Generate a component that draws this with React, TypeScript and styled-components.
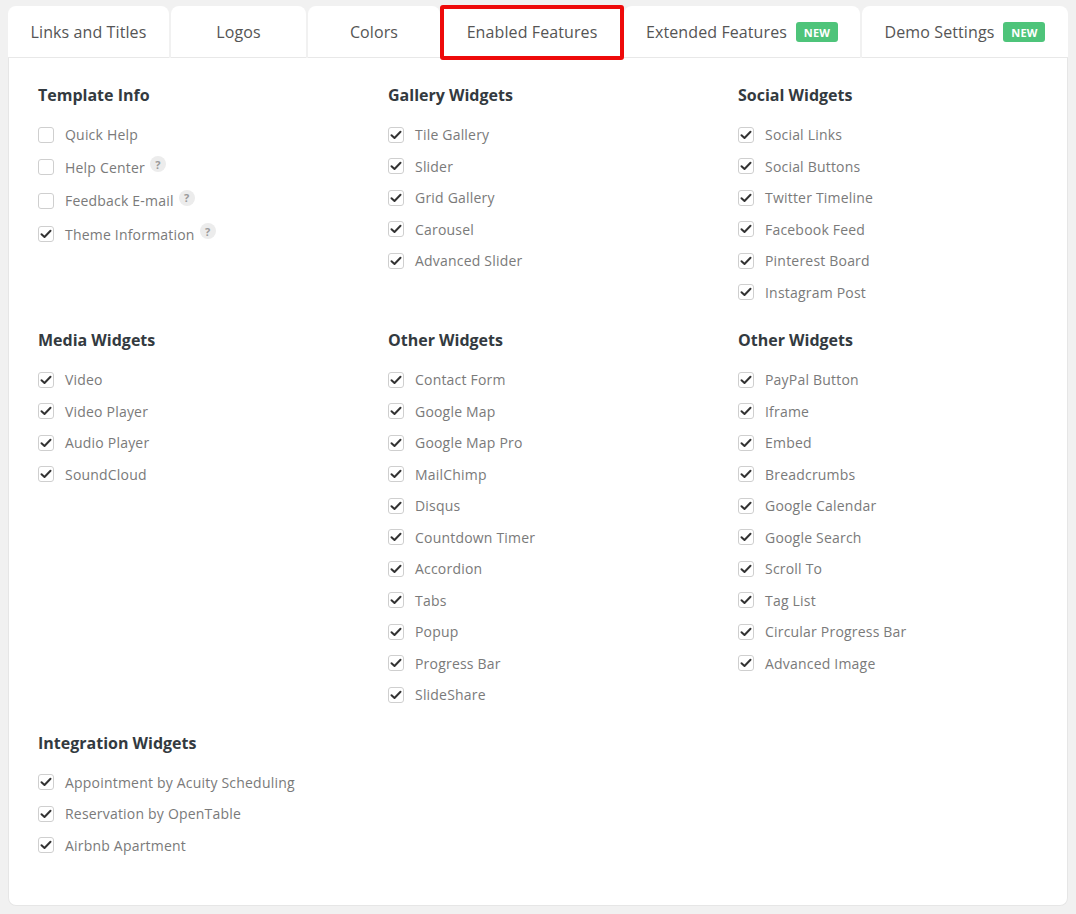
import React from "react";
import styled, { createGlobalStyle } from "styled-components";

const Global = createGlobalStyle`
  html, body { margin: 0; padding: 0; background: #f1f1f1; }
  body { font-family: "Open Sans", "Noto Sans", sans-serif; -webkit-font-smoothing: antialiased; }
  * { box-sizing: border-box; }
`;

const Page = styled.div`
  padding: 6px 8px 8px 8px;
  width: 1076px;
`;

const TabBar = styled.div`
  display: flex;
  gap: 2px;
  height: 52px;
`;

const Tab = styled.div<{ $w: number; $active?: boolean }>`
  position: relative;
  width: ${(p) => p.$w}px;
  flex: none;
  background: #fff;
  border-radius: 8px 8px 0 0;
  border-bottom: 1px solid #e8e8e8;
  display: flex;
  align-items: center;
  justify-content: center;
  gap: 9px;
  font-size: 16px;
  letter-spacing: 0.1px;
  color: #555;
  padding-top: 1px;
`;

const Highlight = styled.div`
  position: absolute;
  left: -2px;
  right: -2px;
  top: -1px;
  bottom: -3px;
  border: 4px solid #ee0a0a;
  border-radius: 3px;
  pointer-events: none;
`;

const NewBadge = styled.span`
  background: #4ec47a;
  color: #fff;
  font-size: 11px;
  font-weight: 700;
  border-radius: 3px;
  height: 20px;
  width: 42px;
  display: inline-flex;
  align-items: center;
  justify-content: center;
  letter-spacing: 0.2px;
`;

const Panel = styled.div`
  background: #fff;
  border: 1px solid #e6e6e6;
  border-top: none;
  border-radius: 0 0 8px 8px;
  padding: 25px 29px 44px 29px;
  display: grid;
  grid-template-columns: 350px 350px 350px;
  row-gap: 20px;
  min-height: 848px;
  align-content: start;
`;

const Section = styled.div`
  display: flex;
  flex-direction: column;
`;

const Heading = styled.div`
  font-size: 16px;
  font-weight: 700;
  color: #333a40;
  line-height: 24px;
  margin-bottom: 12px;
`;

const Item = styled.label<{ $tall?: boolean }>`
  display: flex;
  align-items: center;
  height: ${(p) => (p.$tall ? 33.5 : 31.5)}px;
  font-size: 14px;
  letter-spacing: 0.2px;
  color: #7a7a7a;
`;

const Box = styled.span`
  width: 16px;
  height: 16px;
  border: 1px solid #cfcfcf;
  border-radius: 3px;
  background: #fff;
  display: inline-flex;
  align-items: center;
  justify-content: center;
  margin-right: 11px;
  flex: none;
`;

const Help = styled.span`
  width: 16px;
  height: 16px;
  border-radius: 50%;
  background: #ececec;
  color: #9a9a9a;
  font-size: 11px;
  font-weight: 700;
  display: inline-flex;
  align-items: center;
  justify-content: center;
  margin-left: 5px;
  margin-top: -6px;
`;

const Check = () => (
  <svg width="12" height="10" viewBox="0 0 12 10">
    <path d="M1.5 5.2 L4.5 8 L10.5 1.8" fill="none" stroke="#333" strokeWidth="2" strokeLinecap="round" strokeLinejoin="round" />
  </svg>
);

type It = { label: string; checked?: boolean; help?: boolean };

const sections: { title: string; items: It[] }[] = [
  {
    title: "Template Info",
    items: [
      { label: "Quick Help" },
      { label: "Help Center", help: true },
      { label: "Feedback E-mail", help: true },
      { label: "Theme Information", help: true, checked: true },
    ],
  },
  {
    title: "Gallery Widgets",
    items: ["Tile Gallery", "Slider", "Grid Gallery", "Carousel", "Advanced Slider"].map((l) => ({ label: l, checked: true })),
  },
  {
    title: "Social Widgets",
    items: ["Social Links", "Social Buttons", "Twitter Timeline", "Facebook Feed", "Pinterest Board", "Instagram Post"].map((l) => ({ label: l, checked: true })),
  },
  {
    title: "Media Widgets",
    items: ["Video", "Video Player", "Audio Player", "SoundCloud"].map((l) => ({ label: l, checked: true })),
  },
  {
    title: "Other Widgets",
    items: [
      "Contact Form",
      "Google Map",
      "Google Map Pro",
      "MailChimp",
      "Disqus",
      "Countdown Timer",
      "Accordion",
      "Tabs",
      "Popup",
      "Progress Bar",
      "SlideShare",
    ].map((l) => ({ label: l, checked: true })),
  },
  {
    title: "Other Widgets",
    items: [
      "PayPal Button",
      "Iframe",
      "Embed",
      "Breadcrumbs",
      "Google Calendar",
      "Google Search",
      "Scroll To",
      "Tag List",
      "Circular Progress Bar",
      "Advanced Image",
    ].map((l) => ({ label: l, checked: true })),
  },
  {
    title: "Integration Widgets",
    items: ["Appointment by Acuity Scheduling", "Reservation by OpenTable", "Airbnb Apartment"].map((l) => ({ label: l, checked: true })),
  },
];

const tabs = [
  { label: "Links and Titles", w: 161 },
  { label: "Logos", w: 135 },
  { label: "Colors", w: 132 },
  { label: "Enabled Features", w: 180, active: true },
  { label: "Extended Features", w: 236, isNew: true },
  { label: "Demo Settings", w: 206, isNew: true },
];

export default function App() {
  return (
    <Page>
      <Global />
      <TabBar>
        {tabs.map((t) => (
          <Tab key={t.label} $w={t.w} $active={t.active}>
            {t.label}
            {t.isNew && <NewBadge>NEW</NewBadge>}
            {t.active && <Highlight />}
          </Tab>
        ))}
      </TabBar>
      <Panel>
        {sections.map((s, i) => (
          <Section key={i}>
            <Heading>{s.title}</Heading>
            {s.items.map((it) => (
              <Item key={it.label} $tall={it.help}>
                <Box>{it.checked && <Check />}</Box>
                {it.label}
                {it.help && <Help>?</Help>}
              </Item>
            ))}
          </Section>
        ))}
      </Panel>
    </Page>
  );
}
